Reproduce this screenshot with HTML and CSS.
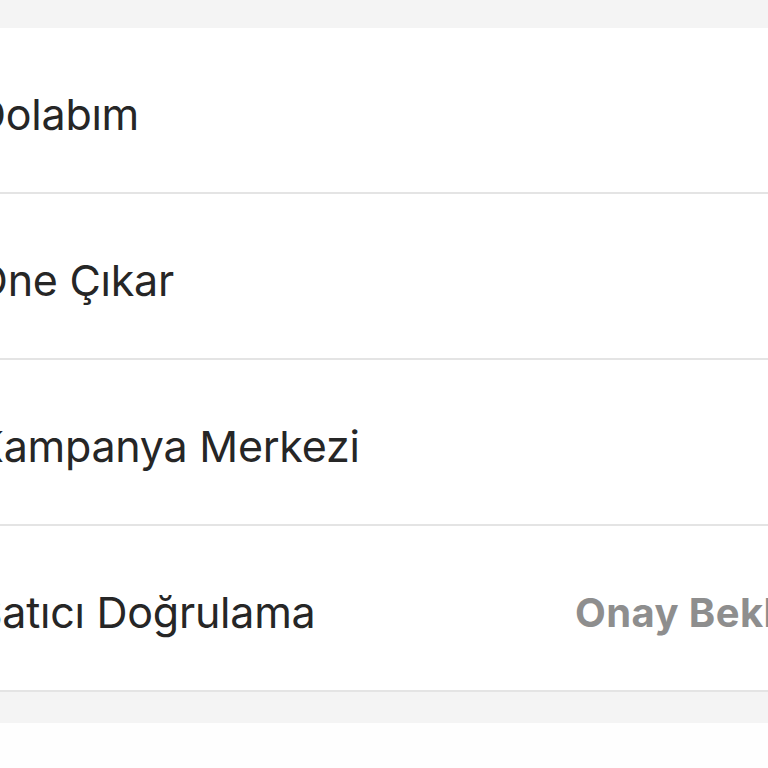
FILE: index.html
```html
<!DOCTYPE html>
<html lang="tr">
<head>
    <meta charset="UTF-8">
    <meta name="viewport" content="width=device-width, initial-scale=1.0">
    <title>Hesabım</title>
    <link rel="stylesheet" href="styles.css">
</head>
<body>
    <div class="page">
        <div class="top-gap"></div>

        <div class="menu">
            <div class="menu-item">
                <span class="menu-label">Dolabım</span>
            </div>
            <div class="menu-item">
                <span class="menu-label">Öne Çıkar</span>
            </div>
            <div class="menu-item">
                <span class="menu-label">Kampanya Merkezi</span>
            </div>
            <div class="menu-item">
                <span class="menu-label">Satıcı Doğrulama</span>
                <span class="menu-value">Onay Bekleniyor</span>
            </div>
        </div>

        <div class="bottom-gap"></div>
    </div>
</body>
</html>
```

FILE: styles.css
```css
body {
    margin: 0;
    padding: 0;
    font-family: 'Inter', 'Roboto', sans-serif;
    background-color: #fefefe;
    color: #262626;
    overflow: hidden;
}

.page {
    width: 768px;
    height: 768px;
    overflow: hidden;
}

.top-gap {
    height: 28px;
    background-color: #f4f4f4;
}

.menu {
    background-color: #ffffff;
}

.menu-item {
    display: grid;
    grid-template-columns: 600px auto;
    align-items: center;
    box-sizing: border-box;
    height: 166px;
    padding-top: 8px;
    margin-left: -25px;
    border-bottom: 2px solid #e4e4e4;
    white-space: nowrap;
}

.menu-label {
    font-size: 43px;
    font-weight: 400;
    letter-spacing: -0.25px;
}

.menu-value {
    font-size: 40px;
    font-weight: 700;
    letter-spacing: 0.4px;
    color: #8e8e8e;
}

.bottom-gap {
    height: 31px;
    background-color: #f4f4f4;
}
```
